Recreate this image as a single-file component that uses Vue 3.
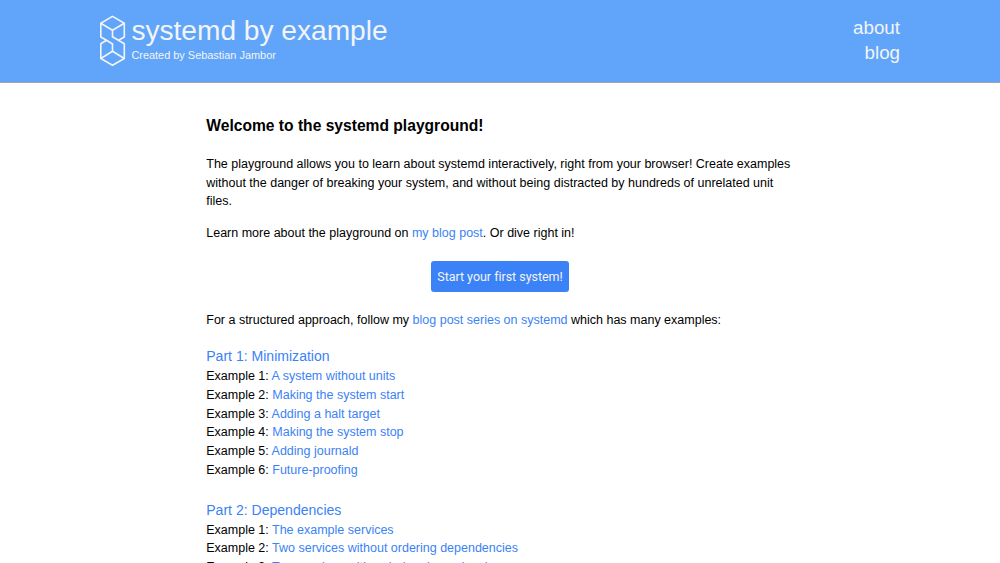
<template>
  <div class="page">
    <header class="header">
      <div class="header__inner">
        <div class="brand">
          <svg class="brand__logo" viewBox="0 0 26 51">
            <path d="M6.5 25.3 L0.8 22 V8.2 L12.5 1.4 L24.3 8.2 V22 L18.5 25.3" />
            <path d="M0.8 8.2 L12.5 15.3 L24.3 8.2 M12.5 15.3 V21.8 L24.3 28.7 V43.5 L12.5 50.2 L0.8 43.5 V28.7 L6.5 25.3 L12.5 29 V36.3 L0.8 43.5 M12.5 36.3 L24.3 43.5" />
          </svg>
          <div>
            <div class="brand__title">systemd by example</div>
            <div class="brand__author">Created by Sebastian Jambor</div>
          </div>
        </div>
        <nav class="nav">
          <a href="#">about</a>
          <a href="#">blog</a>
        </nav>
      </div>
    </header>
    <main class="content">
      <h1>Welcome to the systemd playground!</h1>
      <p>
        The playground allows you to learn about systemd interactively, right from your browser!
        Create examples without the danger of breaking your system, and without being distracted
        by hundreds of unrelated unit files.
      </p>
      <p>Learn more about the playground on <a href="#">my blog post</a>. Or dive right in!</p>
      <div class="start">
        <button class="start__button">Start your first system!</button>
      </div>
      <p>For a structured approach, follow my <a href="#">blog post series on systemd</a> which has many examples:</p>
      <div class="parts">
        <section v-for="part in parts" :key="part.title">
          <h2><a href="#">{{ part.title }}</a></h2>
          <ul>
            <li v-for="(example, idx) in part.examples" :key="example">
              Example {{ idx + 1 }}: <a href="#">{{ example }}</a>
            </li>
          </ul>
        </section>
      </div>
    </main>
  </div>
</template>

<script setup>
const parts = [
  {
    title: 'Part 1: Minimization',
    examples: [
      'A system without units',
      'Making the system start',
      'Adding a halt target',
      'Making the system stop',
      'Adding journald',
      'Future-proofing'
    ]
  },
  {
    title: 'Part 2: Dependencies',
    examples: [
      'The example services',
      'Two services without ordering dependencies',
      'Two services with ordering dependencies'
    ]
  }
]
</script>

<style>
html {
  font-size: 12.5px;
}
body {
  overflow: hidden;
}
</style>

<style scoped>
.page {
  height: 100vh;
  overflow: hidden;
  background: #fff;
  color: #000;
  font-family: 'Liberation Sans', Arial, sans-serif;
  font-size: 1rem;
  line-height: 1.5;
}
a {
  color: #3b82f6;
  text-decoration: none;
}
.header {
  box-sizing: border-box;
  height: 83px;
  background: #60a5fa;
  border-bottom: 1px solid #9ca3af;
}
.header__inner {
  display: flex;
  justify-content: space-between;
  width: 800px;
  margin: 0 auto;
  padding-top: 15px;
  color: #f3f4f6;
}
.brand {
  display: flex;
  gap: 5.4px;
}
.brand__logo {
  width: 26px;
  height: 51px;
  fill: none;
  stroke: #f3f4f6;
  stroke-width: 1.6;
  stroke-linejoin: round;
}
.brand__title {
  font-size: 2.25rem;
  line-height: 2.5rem;
}
.brand__author {
  margin-top: 2px;
  font-size: 0.875rem;
  line-height: 1.25rem;
}
.nav {
  display: flex;
  flex-direction: column;
  text-align: right;
  font-size: 1.5rem;
  line-height: 2rem;
}
.nav a {
  color: #f3f4f6;
}
.content {
  width: 587.5px;
  margin: 0 auto;
  padding-top: 32px;
}
h1 {
  margin: 0 0 18.1px;
  font-size: 1.25rem;
  font-weight: 700;
  line-height: 1.75rem;
}
p {
  margin: 0 0 1rem;
}
.start {
  display: flex;
  justify-content: center;
  margin: 19px 0;
}
.start__button {
  height: 31px;
  padding: 1px 6px 0;
  border: none;
  border-radius: 3px;
  background: #3b82f6;
  color: #f3f4f6;
  font-family: Roboto, sans-serif;
  font-size: 1rem;
  letter-spacing: -0.03px;
  line-height: 1.5;
}
.parts {
  display: flex;
  flex-direction: column;
  gap: 19.8px;
  margin-top: 16px;
}
h2 {
  margin: 0;
  font-size: 1.125rem;
  font-weight: 400;
  line-height: 21px;
}
ul {
  margin: 0;
  padding: 0;
  list-style: none;
}
</style>
